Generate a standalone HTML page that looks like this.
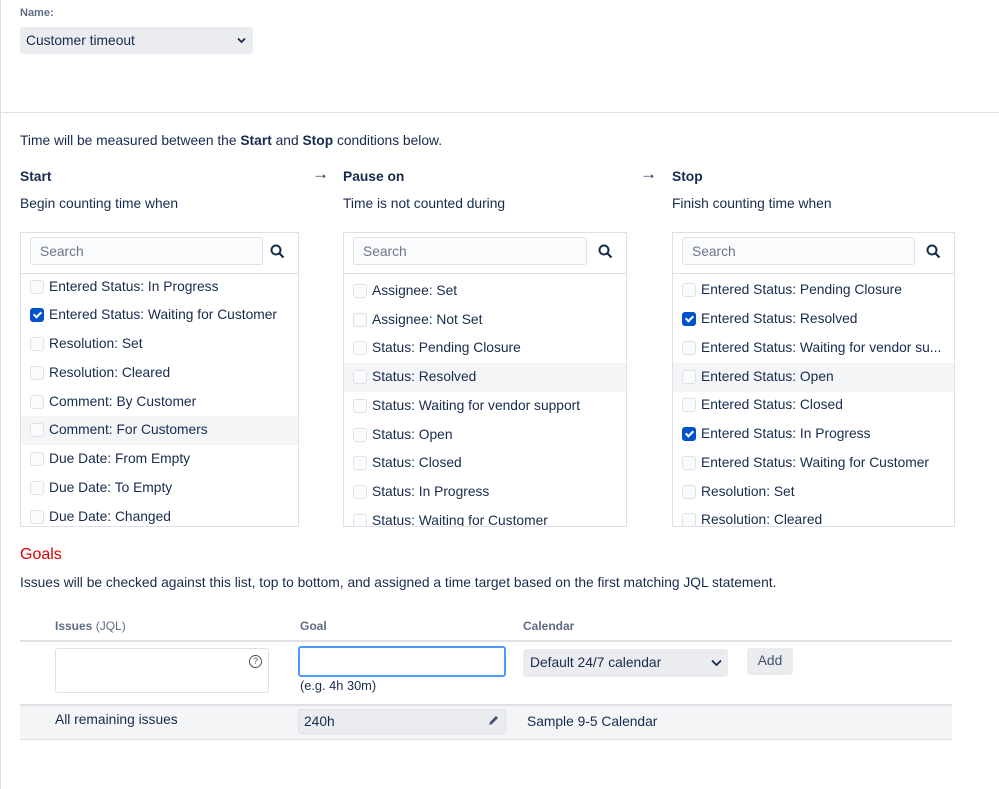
<!DOCTYPE html>
<html><head><style>
*{box-sizing:border-box;margin:0;padding:0}
body{width:999px;height:789px;overflow:hidden;background:#fff;font-family:"Liberation Sans",sans-serif;color:#172b4d;font-size:13.8px;position:relative}
.a{position:absolute}
.box{position:absolute;top:232px;height:295px;border:1px solid #dfe1e6;overflow:hidden}
.srch{position:absolute;left:9px;top:4px;height:28px;border:1px solid #dfe1e6;border-radius:3px;background:#fafbfc;color:#6b778c;padding:6px 9px;font-size:13.8px}
.sico{position:absolute;top:11px}
.div{position:absolute;left:0;right:0;top:40px;border-top:1px solid #dfe1e6}
.it{position:absolute;left:0;right:0;height:28.8px;padding-left:28px;line-height:28.8px;white-space:nowrap}
.it.h{background:#f4f5f7}
.cb{position:absolute;left:9px;top:7px;width:14px;height:14px;border:1.5px solid #dfe1e6;border-radius:3px;background:#fafbfc}
.cb.on{background:#0052cc;border-color:#0052cc}
.cb.on:after{content:"";position:absolute;left:3.5px;top:1px;width:3px;height:6px;border:solid #fff;border-width:0 2px 2px 0;transform:rotate(45deg)}
h4{position:absolute;font-size:13.8px;font-weight:bold}
.arr{position:absolute;top:164px;font-size:17px;font-weight:bold}
</style></head><body>
<div class="a" style="left:0;top:0;bottom:0;border-left:1px solid #ddd"></div>
<div class="a" style="left:20px;top:7px;font-size:11px;font-weight:bold;color:#5e6c84">Name:</div>
<div class="a" style="left:20px;top:27px;width:233px;height:27px;background:#ebecf0;border-radius:3px;padding:6px;font-size:13.8px">Customer timeout<svg class="a" style="right:7px;top:10px" width="9" height="7" viewBox="0 0 9 7"><path d="M1 1.5l3.5 3.5 3.5-3.5" stroke="#172b4d" stroke-width="1.8" fill="none"/></svg></div>
<div class="a" style="left:0;right:0;top:112px;border-top:1px solid #dfe1e6"></div>
<div class="a" style="left:20px;top:133px">Time will be measured between the <b>Start</b> and <b>Stop</b> conditions below.</div>

<h4 style="left:20px;top:169px">Start</h4><div class="a" style="left:20px;top:196px">Begin counting time when</div>
<div class="arr" style="left:312px">→</div>
<h4 style="left:343px;top:169px">Pause on</h4><div class="a" style="left:343px;top:196px">Time is not counted during</div>
<div class="arr" style="left:640px">→</div>
<h4 style="left:672px;top:169px">Stop</h4><div class="a" style="left:672px;top:196px">Finish counting time when</div>

<div class="box" style="left:20px;width:279px">
<div class="srch" style="width:233px">Search</div>
<svg class="sico" style="left:249px" width="15" height="15" viewBox="0 0 15 15"><circle cx="6" cy="6" r="4.5" stroke="#172b4d" stroke-width="2" fill="none"/><path d="M9.5 9.5l4 4" stroke="#172b4d" stroke-width="2.2"/></svg>
<div class="div"></div>
<div class="it" style="top:40px"><span class="cb"></span>Entered Status: In Progress</div>
<div class="it" style="top:68px"><span class="cb on"></span>Entered Status: Waiting for Customer</div>
<div class="it" style="top:97px"><span class="cb"></span>Resolution: Set</div>
<div class="it" style="top:126px"><span class="cb"></span>Resolution: Cleared</div>
<div class="it" style="top:155px"><span class="cb"></span>Comment: By Customer</div>
<div class="it h" style="top:183px"><span class="cb"></span>Comment: For Customers</div>
<div class="it" style="top:212px"><span class="cb"></span>Due Date: From Empty</div>
<div class="it" style="top:241px"><span class="cb"></span>Due Date: To Empty</div>
<div class="it" style="top:270px"><span class="cb"></span>Due Date: Changed</div>
</div>

<div class="box" style="left:343px;width:284px">
<div class="srch" style="width:234px">Search</div>
<svg class="sico" style="left:254px" width="15" height="15" viewBox="0 0 15 15"><circle cx="6" cy="6" r="4.5" stroke="#172b4d" stroke-width="2" fill="none"/><path d="M9.5 9.5l4 4" stroke="#172b4d" stroke-width="2.2"/></svg>
<div class="div"></div>
<div class="it" style="top:44px"><span class="cb"></span>Assignee: Set</div>
<div class="it" style="top:73px"><span class="cb"></span>Assignee: Not Set</div>
<div class="it" style="top:101px"><span class="cb"></span>Status: Pending Closure</div>
<div class="it h" style="top:130px"><span class="cb"></span>Status: Resolved</div>
<div class="it" style="top:159px"><span class="cb"></span>Status: Waiting for vendor support</div>
<div class="it" style="top:188px"><span class="cb"></span>Status: Open</div>
<div class="it" style="top:216px"><span class="cb"></span>Status: Closed</div>
<div class="it" style="top:245px"><span class="cb"></span>Status: In Progress</div>
<div class="it" style="top:274px"><span class="cb"></span>Status: Waiting for Customer</div>
</div>

<div class="box" style="left:672px;width:283px">
<div class="srch" style="width:233px">Search</div>
<svg class="sico" style="left:253px" width="15" height="15" viewBox="0 0 15 15"><circle cx="6" cy="6" r="4.5" stroke="#172b4d" stroke-width="2" fill="none"/><path d="M9.5 9.5l4 4" stroke="#172b4d" stroke-width="2.2"/></svg>
<div class="div"></div>
<div class="it" style="top:43px"><span class="cb"></span>Entered Status: Pending Closure</div>
<div class="it" style="top:72px"><span class="cb on"></span>Entered Status: Resolved</div>
<div class="it" style="top:101px"><span class="cb"></span>Entered Status: Waiting for vendor su...</div>
<div class="it h" style="top:130px"><span class="cb"></span>Entered Status: Open</div>
<div class="it" style="top:158px"><span class="cb"></span>Entered Status: Closed</div>
<div class="it" style="top:187px"><span class="cb on"></span>Entered Status: In Progress</div>
<div class="it" style="top:216px"><span class="cb"></span>Entered Status: Waiting for Customer</div>
<div class="it" style="top:245px"><span class="cb"></span>Resolution: Set</div>
<div class="it" style="top:273px"><span class="cb"></span>Resolution: Cleared</div>
</div>

<div class="a" style="left:20px;top:546px;font-size:16px;color:#d00">Goals</div>
<div class="a" style="left:20px;top:575px">Issues will be checked against this list, top to bottom, and assigned a time target based on the first matching JQL statement.</div>

<div class="a" style="left:55px;top:619px;font-size:12px;font-weight:bold;color:#5e6c84">Issues <span style="font-weight:normal">(JQL)</span></div>
<div class="a" style="left:300px;top:619px;font-size:12px;font-weight:bold;color:#5e6c84">Goal</div>
<div class="a" style="left:523px;top:619px;font-size:12px;font-weight:bold;color:#5e6c84">Calendar</div>
<div class="a" style="left:20px;width:932px;top:640px;border-top:2px solid #dfe1e6"></div>
<div class="a" style="left:55px;top:648px;width:214px;height:45px;border:1px solid #dfe1e6;border-radius:3px"></div>
<div class="a" style="left:249px;top:655px;width:13px;height:13px;border:1.3px solid #555;border-radius:50%;font-size:9px;text-align:center;line-height:11px;color:#555">?</div>
<div class="a" style="left:298px;top:646px;width:208px;height:31px;border:2px solid #4c9aff;border-radius:3px"></div>
<div class="a" style="left:300px;top:678px;font-size:12.8px">(e.g. 4h 30m)</div>
<div class="a" style="left:523px;top:649px;width:205px;height:28px;background:#ebecf0;border-radius:3px;padding:6px 7px">Default 24/7 calendar<svg class="a" style="right:6px;top:10px" width="11" height="8" viewBox="0 0 11 8"><path d="M1 1.5l4.5 4.5 4.5-4.5" stroke="#172b4d" stroke-width="1.8" fill="none"/></svg></div>
<div class="a" style="left:747px;top:648px;width:46px;height:27px;background:#ebecf0;border-radius:3px;text-align:center;line-height:26px;color:#42526e">Add</div>
<div class="a" style="left:20px;width:932px;top:704px;height:36px;background:#f4f5f7;border-top:2px solid #dfe1e6;border-bottom:1px solid #dfe1e6"></div>
<div class="a" style="left:55px;top:712px">All remaining issues</div>
<div class="a" style="left:298px;top:709px;width:208px;height:25px;background:#ebecf0;border:1px solid #dfe1e6;border-radius:3px;padding:4px 5px">240h<svg class="a" style="right:6px;top:5px" width="12" height="12" viewBox="0 0 12 12"><path d="M2 10l1-3 6-6 2 2-6 6z" fill="#42526e"/></svg></div>
<div class="a" style="left:527px;top:714px">Sample 9-5 Calendar</div>
</body></html>
